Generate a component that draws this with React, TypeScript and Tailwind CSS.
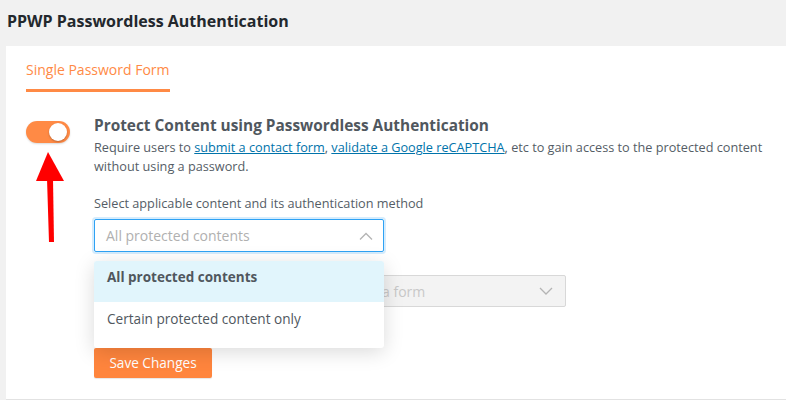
import React from "react";

const Chevron = ({ up }: { up?: boolean }) => (
  <svg width="14" height="8" viewBox="0 0 14 8" fill="none" stroke="#b4b4b4" strokeWidth="1.3">
    {up ? <path d="M1 7.5 L7 1.5 L13 7.5" /> : <path d="M1 1 L7 7 L13 1" />}
  </svg>
);

export default function App() {
  return (
    <div
      className="w-[786px] h-[400px] bg-[#f1f1f1] overflow-hidden flex flex-col"
      style={{ fontFamily: '"Open Sans", "Noto Sans", sans-serif' }}
    >
      <h1 className="pl-[7px] pt-[8px] h-[46px] shrink-0 text-[16px] font-bold text-[#23282d] leading-[26px]">
        PPWP Passwordless Authentication
      </h1>
      <div className="ml-[6px] flex-1 bg-white border-b border-[#e2e2e2] relative">
        <div className="flex pl-[20px] pt-[14px]">
          <div className="border-b-[3px] border-[#ff8a45] pb-[9px] text-[14px] leading-[20px] text-[#ff8a45]">
            Single Password Form
          </div>
        </div>
        <div className="flex pl-[20px] pt-[23px]">
          <div className="w-[68px] shrink-0 relative">
            <div className="w-[44px] h-[22px] rounded-full bg-[#ff8a45] mt-[6px] relative shadow-[0_1px_2px_rgba(0,0,0,0.15)]">
              <div className="absolute right-[3px] top-[2px] w-[18px] h-[18px] rounded-full bg-white shadow-[0_1px_2px_rgba(0,0,0,0.25)]" />
            </div>
            <svg className="absolute left-[8px] top-[37px]" width="32" height="92" viewBox="0 0 32 92">
              <polygon points="14,0 2,29 30,29" fill="#ff0000" />
              <polygon points="13,27 19,27 20,90 15,90" fill="#ff0000" />
            </svg>
          </div>
          <div className="flex-1 pr-[12px] text-[#555d66]">
            <div className="text-[15.4px] font-bold leading-[22px] text-[#50575e]">
              Protect Content using Passwordless Authentication
            </div>
            <p className="text-[12.7px] leading-[19px] mt-[1px]">
              Require users to{" "}
              <a className="text-[#0073aa] underline">submit a contact form</a>,{" "}
              <a className="text-[#0073aa] underline">validate a Google reCAPTCHA</a>, etc to gain access to the
              protected content without using a password.
            </p>
            <div className="text-[12.7px] leading-[19px] mt-[18px]">
              Select applicable content and its authentication method
            </div>
            <div className="relative mt-[6px] w-[290px]">
              <div className="h-[33px] w-[290px] border border-[#2ea2f4] rounded-[2px] shadow-[0_0_0_2px_rgba(46,162,244,0.2)] flex items-center justify-between pl-[11px] pr-[10px]">
                <span className="text-[14px] text-[#b0b0b0]">All protected contents</span>
                <Chevron up />
              </div>
              <div className="absolute left-0 top-[42px] w-[290px] bg-white rounded-[3px] shadow-[0_4px_20px_rgba(0,0,0,0.15)] z-10 overflow-hidden">
                <div className="h-[41px] bg-[#e1f5fc] pt-[6px] px-[13px] text-[13.5px] leading-[20px] font-bold text-[#50575e]">
                  All protected contents
                </div>
                <div className="h-[46px] pt-[7px] px-[13px] text-[13.6px] leading-[20px] text-[#50575e]">
                  Certain protected content only
                </div>
              </div>
            </div>
            <div className="flex items-center mt-[23px] gap-[12px]">
              <div className="w-[176px] text-[13px] text-[#555d66]">Contact form</div>
              <div className="h-[32px] w-[284px] bg-[#f3f3f3] border border-[#d8d8d8] rounded-[2px] flex items-center justify-between pl-[12px] pr-[12px]">
                <span className="text-[14px] text-[#c8c8c8]">Please select a form</span>
                <Chevron />
              </div>
            </div>
            <button className="mt-[41px] h-[30px] w-[118px] bg-[#ff853d] text-white text-[13.6px] rounded-[2px] shadow-[0_1px_1px_rgba(0,0,0,0.1)]">
              Save Changes
            </button>
          </div>
        </div>
      </div>
    </div>
  );
}
